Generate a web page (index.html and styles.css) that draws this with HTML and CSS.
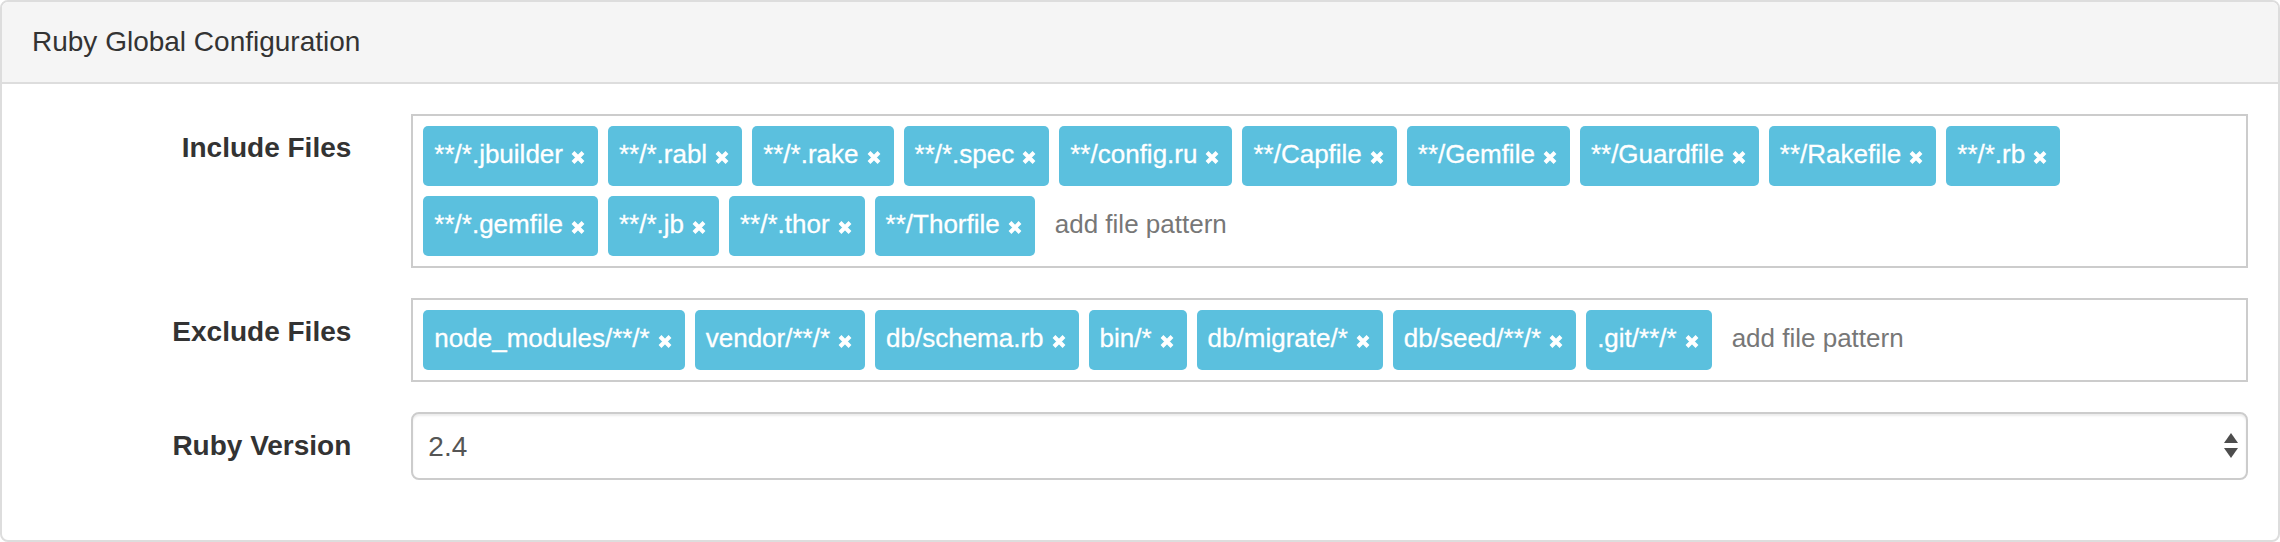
FILE: index.html
```html
<!DOCTYPE html>
<html lang="en">
<head>
<meta charset="utf-8">
<title>Ruby Global Configuration</title>
<link rel="stylesheet" href="styles.css">
</head>
<body>
<svg class="defs" width="0" height="0" aria-hidden="true">
  <symbol id="icon-remove" viewBox="0 0 14 13">
    <path d="M2 1.5 L12 11.5 M12 1.5 L2 11.5" stroke="currentColor" stroke-width="4" fill="none"/>
  </symbol>
</svg>
<div class="panel">
  <div class="panel-heading">Ruby Global Configuration</div>
  <div class="panel-body">
    <div class="form-group">
      <label class="control-label">Include Files</label>
      <div class="control">
        <div class="tagsinput">
          <span class="tag">**/*.jbuilder<svg class="remove"><use href="#icon-remove"/></svg></span>
          <span class="tag">**/*.rabl<svg class="remove"><use href="#icon-remove"/></svg></span>
          <span class="tag">**/*.rake<svg class="remove"><use href="#icon-remove"/></svg></span>
          <span class="tag">**/*.spec<svg class="remove"><use href="#icon-remove"/></svg></span>
          <span class="tag">**/config.ru<svg class="remove"><use href="#icon-remove"/></svg></span>
          <span class="tag">**/Capfile<svg class="remove"><use href="#icon-remove"/></svg></span>
          <span class="tag">**/Gemfile<svg class="remove"><use href="#icon-remove"/></svg></span>
          <span class="tag">**/Guardfile<svg class="remove"><use href="#icon-remove"/></svg></span>
          <span class="tag">**/Rakefile<svg class="remove"><use href="#icon-remove"/></svg></span>
          <span class="tag">**/*.rb<svg class="remove"><use href="#icon-remove"/></svg></span>
          <span class="tag">**/*.gemfile<svg class="remove"><use href="#icon-remove"/></svg></span>
          <span class="tag">**/*.jb<svg class="remove"><use href="#icon-remove"/></svg></span>
          <span class="tag">**/*.thor<svg class="remove"><use href="#icon-remove"/></svg></span>
          <span class="tag">**/Thorfile<svg class="remove"><use href="#icon-remove"/></svg></span>
          <input class="tag-input" type="text" placeholder="add file pattern">
        </div>
      </div>
    </div>
    <div class="form-group">
      <label class="control-label">Exclude Files</label>
      <div class="control">
        <div class="tagsinput">
          <span class="tag">node_modules/**/*<svg class="remove"><use href="#icon-remove"/></svg></span>
          <span class="tag">vendor/**/*<svg class="remove"><use href="#icon-remove"/></svg></span>
          <span class="tag">db/schema.rb<svg class="remove"><use href="#icon-remove"/></svg></span>
          <span class="tag">bin/*<svg class="remove"><use href="#icon-remove"/></svg></span>
          <span class="tag">db/migrate/*<svg class="remove"><use href="#icon-remove"/></svg></span>
          <span class="tag">db/seed/**/*<svg class="remove"><use href="#icon-remove"/></svg></span>
          <span class="tag">.git/**/*<svg class="remove"><use href="#icon-remove"/></svg></span>
          <input class="tag-input" type="text" placeholder="add file pattern">
        </div>
      </div>
    </div>
    <div class="form-group">
      <label class="control-label">Ruby Version</label>
      <div class="control">
        <div class="select-wrap">
          <select class="form-select">
            <option>2.4</option>
          </select>
          <svg class="select-arrows" viewBox="0 0 14 26" aria-hidden="true">
            <polygon points="0,10 7,0 14,10"/>
            <polygon points="0,15 14,15 7,25"/>
          </svg>
        </div>
      </div>
    </div>
  </div>
</div>
</body>
</html>
```

FILE: styles.css
```css
* {
  box-sizing: border-box;
}

html, body {
  margin: 0;
  padding: 0;
  background: #fff;
}

body {
  font-family: "Liberation Sans", Arial, Helvetica, sans-serif;
  font-size: 28px;
  line-height: 40px;
  color: #333;
}

.defs {
  position: absolute;
  width: 0;
  height: 0;
  overflow: hidden;
}

.panel {
  width: 2280px;
  height: 542px;
  border: 2px solid #ddd;
  border-radius: 8px;
  background: #fff;
  overflow: hidden;
}

.panel-heading {
  padding: 20px 30px;
  background: #f5f5f5;
  border-bottom: 2px solid #ddd;
  font-size: 28px;
  line-height: 40px;
  color: #333;
}

.panel-body {
  padding: 30px 0;
}

.form-group {
  display: grid;
  grid-template-columns: 16.6667% 1fr;
  margin-bottom: 30px;
}

.control-label {
  padding: 14px 30px 0 30px;
  text-align: right;
  font-weight: bold;
  font-size: 28px;
  line-height: 40px;
  color: #333;
}

.control {
  padding: 0 30px;
  min-width: 0;
}

.tagsinput {
  display: flex;
  flex-wrap: wrap;
  align-items: center;
  gap: 10px;
  padding: 10px;
  border: 2px solid #ccc;
  background: #fff;
}

.tag {
  display: inline-flex;
  align-items: center;
  height: 60px;
  padding: 0 13px 4px 11px;
  background: #5bc0de;
  color: #fff;
  border-radius: 5px;
  font-size: 26px;
  line-height: 26px;
  white-space: nowrap;
  -webkit-text-stroke: 0.3px #fff;
}

.remove {
  width: 14px;
  height: 13px;
  margin-left: 8px;
  margin-top: 6px;
  color: #fff;
  flex: none;
}

.tag-input {
  height: 60px;
  width: 320px;
  padding: 0 0 4px 10px;
  border: none;
  outline: none;
  background: transparent;
  font-family: "Liberation Sans", Arial, Helvetica, sans-serif;
  font-size: 26px;
  color: #555;
}

.tag-input::placeholder {
  color: #777;
  opacity: 1;
}

.select-wrap {
  position: relative;
}

.form-select {
  display: block;
  width: 100%;
  height: 68px;
  padding: 0 40px 0 15px;
  border: 2px solid #ccc;
  border-radius: 8px;
  background: #fff;
  box-shadow: inset 0 2px 2px rgba(0, 0, 0, 0.075);
  font-family: "Liberation Sans", Arial, Helvetica, sans-serif;
  font-size: 28px;
  color: #555;
  -webkit-appearance: none;
  appearance: none;
  outline: none;
}

.select-arrows {
  position: absolute;
  right: 10px;
  top: 21px;
  width: 14px;
  height: 26px;
  fill: #4d4d4d;
  pointer-events: none;
}
```
